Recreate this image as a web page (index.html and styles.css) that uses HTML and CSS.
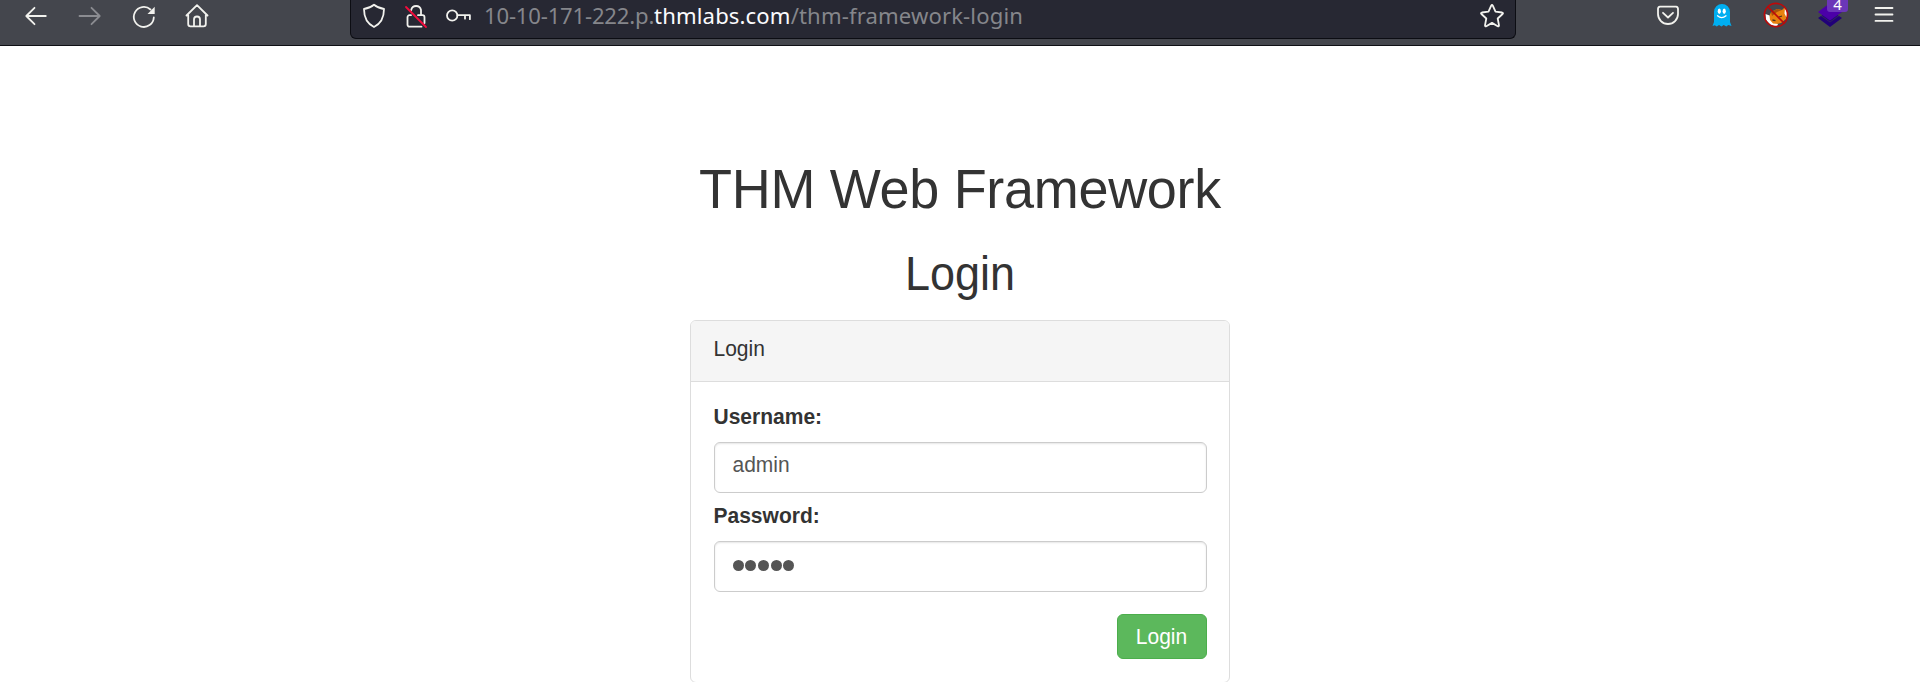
FILE: index.html
```html
<!DOCTYPE html>
<html lang="en">
<head>
<meta charset="utf-8">
<title>THM Web Framework</title>
<link rel="stylesheet" href="styles.css">
</head>
<body>
<header class="toolbar">
  <nav class="nav">
    <svg class="icon" width="24" height="24" viewBox="0 0 24 24"><path d="M22.800 12H3.500M11.500 3.800L3.300 12l8.200 8.200"/></svg>
    <svg class="icon dim" width="24" height="24" viewBox="0 0 24 24"><path d="M1.500 12h20M13.500 3.800l8.200 8.200-8.200 8.200"/></svg>
    <svg class="icon" width="24" height="24" viewBox="0 0 24 24"><path d="M21.800 13.500A10 10 0 1 1 18.500 5.500"/><path class="solid" d="M22.700 2.800v7.200h-7.200z"/></svg>
    <svg class="icon" width="24" height="24" viewBox="0 0 24 24"><path d="M1.500 11.500L12 1.200l10.500 10.300M3.200 10v10a2.300 2.300 0 0 0 2.300 2.300h13a2.300 2.300 0 0 0 2.300-2.300V10M9 22v-6.500a3 3 0 0 1 6 0V22"/></svg>
  </nav>
  <div class="urlbar">
    <svg class="icon" width="24" height="26" viewBox="0 0 24 26"><path d="M12 1.800c3 2.600 6.500 3.600 10 4.200 0 8-2.500 14.300-10 18C4.500 20.300 2 14 2 6 5.500 5.400 9 4.400 12 1.800z"/></svg>
    <svg class="icon" width="24" height="26" viewBox="0 0 24 26"><path d="M7.200 7a5 5 0 0 1 9.800 0v5M14 12.200h4.500a2 2 0 0 1 2 2V20M17.500 23.700H5.500a2 2 0 0 1-2-2v-7.500a2 2 0 0 1 2-2H7"/><path class="slash" d="M2 4l20 20"/></svg>
    <svg class="icon" width="26" height="24" viewBox="0 0 26 24"><circle cx="6.200" cy="11.500" r="5.200"/><path d="M11.400 11.200h12.500v4M19 11.200v3.500"/></svg>
    <span class="url"><span class="sub">10-10-171-222.p.</span><b>thmlabs.com</b>/thm-framework-login</span>
    <svg class="icon star" width="26" height="26" viewBox="0 0 26 26"><path d="M12.200 2.600q.8-1.500 1.600 0l2.700 6.100 6.600.8q1.500.4.500 1.500l-4.900 4.500 1.300 6.800q0 1.400-1.300.9L13 19.900l-5.700 3.300q-1.300.5-1.300-.9l1.300-6.800L2.400 11q-1-1.100.5-1.500l6.600-.8z"/></svg>
  </div>
  <div class="actions">
    <svg class="icon" width="24" height="24" viewBox="0 0 24 24"><path d="M4 3.700h16A2.300 2.300 0 0 1 22 6V11a10 10 0 0 1-20 0V6A2.300 2.300 0 0 1 4 3.700zM7 9.800l5 4.700 5-4.700"/></svg>
    <svg width="20" height="24" viewBox="0 0 20 24"><path fill="#00aef0" d="M2 19V9a8 8 0 0 1 16 0v10l1.500 4-3.200-1-2 1.600-2.600-1.600-2.200 1.600-2.500-1.600-2.200 1.400-2-1.200L.5 23z"/><g fill="#fff"><ellipse cx="7.300" cy="8.200" rx="1.600" ry="2.700"/><ellipse cx="12.200" cy="8.200" rx="1.600" ry="2.700"/></g><path d="M5.500 12.800q4.200 3.500 8.500 0" fill="none" stroke="#fff" stroke-width="1.300" stroke-linecap="round"/></svg>
    <svg width="26" height="26" viewBox="0 0 26 26"><path fill="#e8820f" d="M5 17l3-7 6-3 5 1 3-3 2 6-1 6-5 4-8 2-4-2z"/><path fill="#fff" d="M2.500 12l4 1.500L7 18l3 3.500 5 .5-1 2.500-6-1.500-5-5zM22 5.500l2 5-.5 5-2-4z"/><path fill="#a95208" d="M8 10l6-3 5 1-5 2-5 4z"/><path stroke="#4a3120" stroke-width="1.300" d="M9.500 18l3 .7M16 15l3-1"/><circle cx="13" cy="13" r="11.600" fill="none" stroke="#bd0909" stroke-width="1.600"/><path d="M5 5l16 16" stroke="#bd0909" stroke-width="1.600"/></svg>
    <div class="layers">
      <svg width="26" height="26" viewBox="0 0 26 26"><path fill="#210078" d="M1 16l12-8 12 8-12 9z"/><path fill="#44464d" d="M1 10.500l12 9 12-9v1.500l-12 8.500-12-8.500z" opacity=".5"/><path fill="#4b00a8" d="M1 10l12-9 12 9-12 8.500z"/></svg>
      <span class="badge">4</span>
    </div>
    <svg class="icon" width="20" height="24" viewBox="0 0 20 24"><path d="M1.500 5h17M1.500 11.500h17M1.500 17.900h17"/></svg>
  </div>
</header>
<main class="page">
  <h1>THM Web Framework</h1>
  <h2>Login</h2>
  <section class="panel">
    <div class="panel-heading"><span class="tall">Login</span></div>
    <form class="panel-body">
      <label class="tall" for="user">Username:</label>
      <div class="input" id="user"><span class="tall">admin</span></div>
      <label class="tall" for="pass">Password:</label>
      <div class="input password" id="pass"><i></i><i></i><i></i><i></i><i></i></div>
      <button type="button"><span class="tall">Login</span></button>
    </form>
  </section>
</main>
</body>
</html>
```
FILE: styles.css
```css
* { box-sizing: border-box; }
body { margin: 0; height: 682px; overflow: hidden; background: #fff; color: #333; font: 21px/30px "Liberation Sans", Arial, sans-serif; }
.toolbar { height: 46px; display: flex; background: #44464d; border-bottom: 1px solid #0f1015; }
svg { display: block; flex: none; }
.icon { fill: none; stroke: #f2f2ee; stroke-width: 1.8; stroke-linecap: round; stroke-linejoin: round; }
.dim { stroke: #8b8c91; }
.icon .solid { fill: #f2f2ee; stroke: none; }
.icon .slash { stroke: #f50b3c; }
.nav { width: 350px; height: 32px; padding-left: 23px; display: flex; align-items: center; gap: 30px; }
.nav :nth-child(2) { margin-left: 1px; }
.nav :nth-child(4) { margin-left: -1px; }
.urlbar { width: 1166px; height: 39px; padding: 0 10px 7px 11px; display: flex; align-items: center; background: #272833; border: 1px solid #0c0d13; border-top: 0; border-radius: 0 0 6px 6px; }
.urlbar .icon { margin-right: 18px; }
.urlbar .icon:nth-child(3) { margin-right: 12px; }
.url { padding-bottom: 2px; font: 22.100px/30px "Noto Sans", sans-serif; letter-spacing: .130px; color: #85868b; white-space: nowrap; }
.sub { letter-spacing: -.190px; }
.url b { font-weight: 400; color: #fbfbfe; }
.urlbar .icon.star { margin: 0 0 0 auto; }
.actions { height: 30px; padding-left: 140px; display: flex; align-items: center; }
.actions > :nth-child(2) { margin-left: 32px; }
.actions > :nth-child(3) { margin-left: 31px; }
.actions > :nth-child(4) { margin-left: 28px; }
.actions > :nth-child(5) { margin-left: 31px; }
.layers { position: relative; width: 26px; }
.badge { position: absolute; left: 10px; top: -2px; width: 21px; height: 12px; border-radius: 0 0 3px 3px; background: #6b36b8; color: #fff; font: 15px/8px "Noto Sans", sans-serif; text-align: center; }
.page { width: 540px; margin: 0 auto; padding-top: 113px; }
h1, h2 { margin: 0; font-weight: 400; text-align: center; white-space: nowrap; transform-origin: 50% 81%; }
h1 { font-size: 54px; line-height: 60px; letter-spacing: -.300px; transform: scaleY(1.030); }
h2 { font-size: 45px; line-height: 50px; margin-top: 31px; transform: scaleY(1.050); }
.tall { display: block; transform: scaleY(1.060); transform-origin: 0 73.300%; }
.panel { height: 363px; margin-top: 20px; border: 1px solid #ddd; border-radius: 6px; }
.panel-heading { height: 61px; padding: 13px 22.500px; background: #f5f5f5; border-bottom: 1px solid #ddd; border-radius: 5px 5px 0 0; }
.panel-body { padding: 20px 22.500px; display: flex; flex-direction: column; }
label { height: 30px; font-weight: 700; margin-bottom: 10px; }
.input { height: 51px; margin-bottom: 8px; padding: 0 18px 5px; display: flex; align-items: center; border: 1px solid #ccc; border-radius: 6px; background: #fff; box-shadow: inset 0 1px 2px rgba(0,0,0,.1); color: #555; }
.password { margin-bottom: 22px; padding-bottom: 2px; gap: 1.500px; }
.password i { width: 11.200px; height: 11.200px; border-radius: 50%; background: #555; }
button { align-self: flex-end; width: 90px; height: 45px; padding: 0; border: 1px solid #4cae4c; border-radius: 6px; background: #5cb85c; color: #fff; font: inherit; }
```
